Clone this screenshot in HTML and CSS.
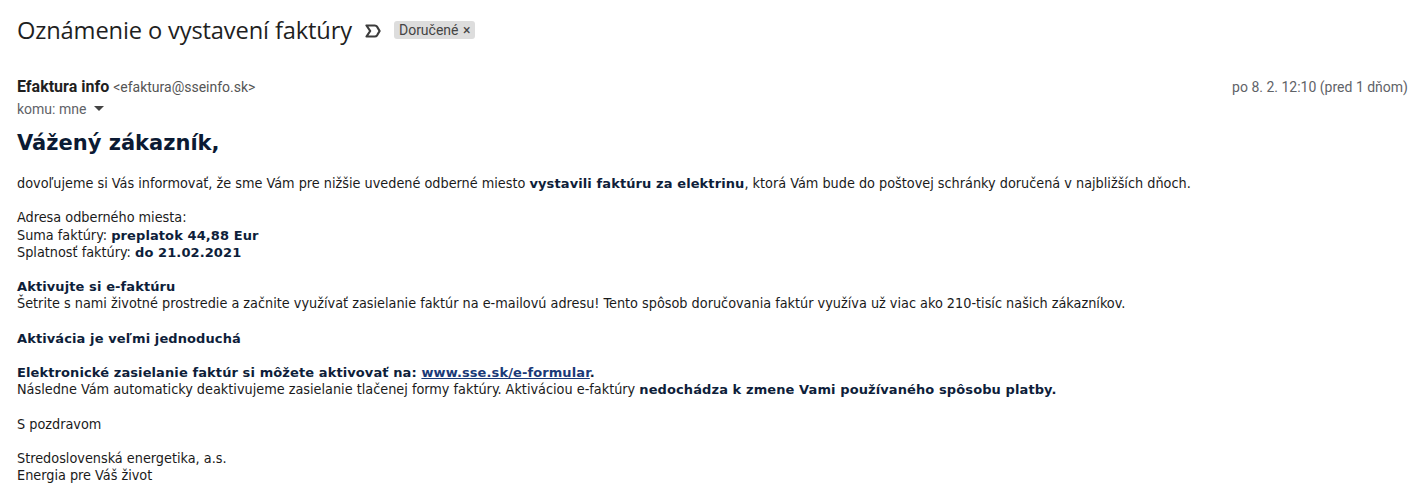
FILE: index.html
```html
<!DOCTYPE html>
<html lang="sk">
<head>
<meta charset="utf-8">
<title>Oznámenie o vystavení faktúry</title>
<link rel="stylesheet" href="styles.css">
</head>
<body>
<div class="page">
  <div class="subject-row">
    <h1 class="subject">Oznámenie o vystavení faktúry</h1>
    <svg class="imp" width="16" height="14" viewBox="0 0 16 14"><path d="M1.5 1.5 H9.8 Q11.2 1.5 12.1 2.7 L14.6 7 L12.1 11.3 Q11.2 12.5 9.8 12.5 H1.5 L5.2 7 Z" fill="none" stroke="#3c3c3c" stroke-width="2.2" stroke-linejoin="round"/></svg>
    <span class="label">Doručené <span class="label-x">×</span></span>
  </div>
  <div class="header">
    <div class="from-row">
      <div class="from"><span class="name">Efaktura info</span> <span class="addr">&lt;efaktura@sseinfo.sk&gt;</span></div>
      <div class="date">po 8. 2. 12:10 (pred 1 dňom)</div>
    </div>
    <div class="to">komu: mne <svg class="caret" width="10" height="6" viewBox="0 0 10 6"><path d="M0 0 H10 L5 5 Z" fill="#444"/></svg></div>
  </div>
  <div class="body">
    <h2 class="greet">Vážený zákazník,</h2>
    <p>dovoľujeme si Vás informovať, že sme Vám pre nižšie uvedené odberné miesto <b>vystavili faktúru za elektrinu</b>, ktorá Vám bude do poštovej schránky doručená v najbližších dňoch.</p>
    <p>Adresa odberného miesta:<br>Suma faktúry: <b>preplatok 44,88 Eur</b><br>Splatnosť faktúry: <b>do 21.02.2021</b></p>
    <p><b>Aktivujte si e-faktúru</b><br>Šetrite s nami životné prostredie a začnite využívať zasielanie faktúr na e-mailovú adresu! Tento spôsob doručovania faktúr využíva už viac ako 210-tisíc našich zákazníkov.</p>
    <p><b>Aktivácia je veľmi jednoduchá</b></p>
    <p><b>Elektronické zasielanie faktúr si môžete aktivovať na: <a href="#">www.sse.sk/e-formular</a>.</b><br>Následne Vám automaticky deaktivujeme zasielanie tlačenej formy faktúry. Aktiváciou e-faktúry <b>nedochádza k zmene Vami používaného spôsobu platby.</b></p>
    <p>S pozdravom</p>
    <p>Stredoslovenská energetika, a.s.<br>Energia pre Váš život</p>
  </div>
</div>
</body>
</html>
```
FILE: styles.css
```css
html, body { margin: 0; padding: 0; background: #fff; }
.page { padding: 0 7px 0 17px; font-family: Roboto, "Liberation Sans", sans-serif; color: #222; }
.subject-row { display: flex; align-items: center; height: 60px; }
.subject { margin: 0; font-family: "Open Sans", Roboto, sans-serif; font-weight: 400; font-size: 23.7px; line-height: 30px; color: #1f1f1f; letter-spacing: -0.15px; }
.imp { margin-left: 13px; margin-top: 1px; }
.label { margin-left: 13px; background: #ddd; color: #444; font-size: 14px; padding: 1px 5px 1px 5px; border-radius: 3px; line-height: 16px; }
.label-x { margin-left: 1px; }
.header { padding-top: 16px; }
.from-row { display: flex; justify-content: space-between; align-items: baseline; line-height: 22px; }
.name { font-weight: 700; font-size: 16px; color: #1f1f1f; }
.addr { font-size: 14px; color: #555; }
.date { font-size: 14px; color: #5f6368; }
.to { font-size: 14px; line-height: 18px; color: #5f6368; margin-top: 2px; }
.caret { margin-left: 4px; vertical-align: 2px; }
.body { font-family: "DejaVu Sans Condensed", "DejaVu Sans", sans-serif; font-size: 14.3px; line-height: 17.2px; color: #1a1a1a; padding-top: 10px; }
.greet { margin: 0 0 17px; font-family: "DejaVu Sans", sans-serif; font-size: 21px; line-height: 30px; font-weight: 700; color: #0b1a33; letter-spacing: 0; }
.body p { margin: 0 0 17.2px; }
.body b { font-family: "DejaVu Sans", sans-serif; font-size: 13px; color: #0e1e3a; letter-spacing: 0.1px; }
.body a { color: #1a3a78; text-decoration: underline; }
```
